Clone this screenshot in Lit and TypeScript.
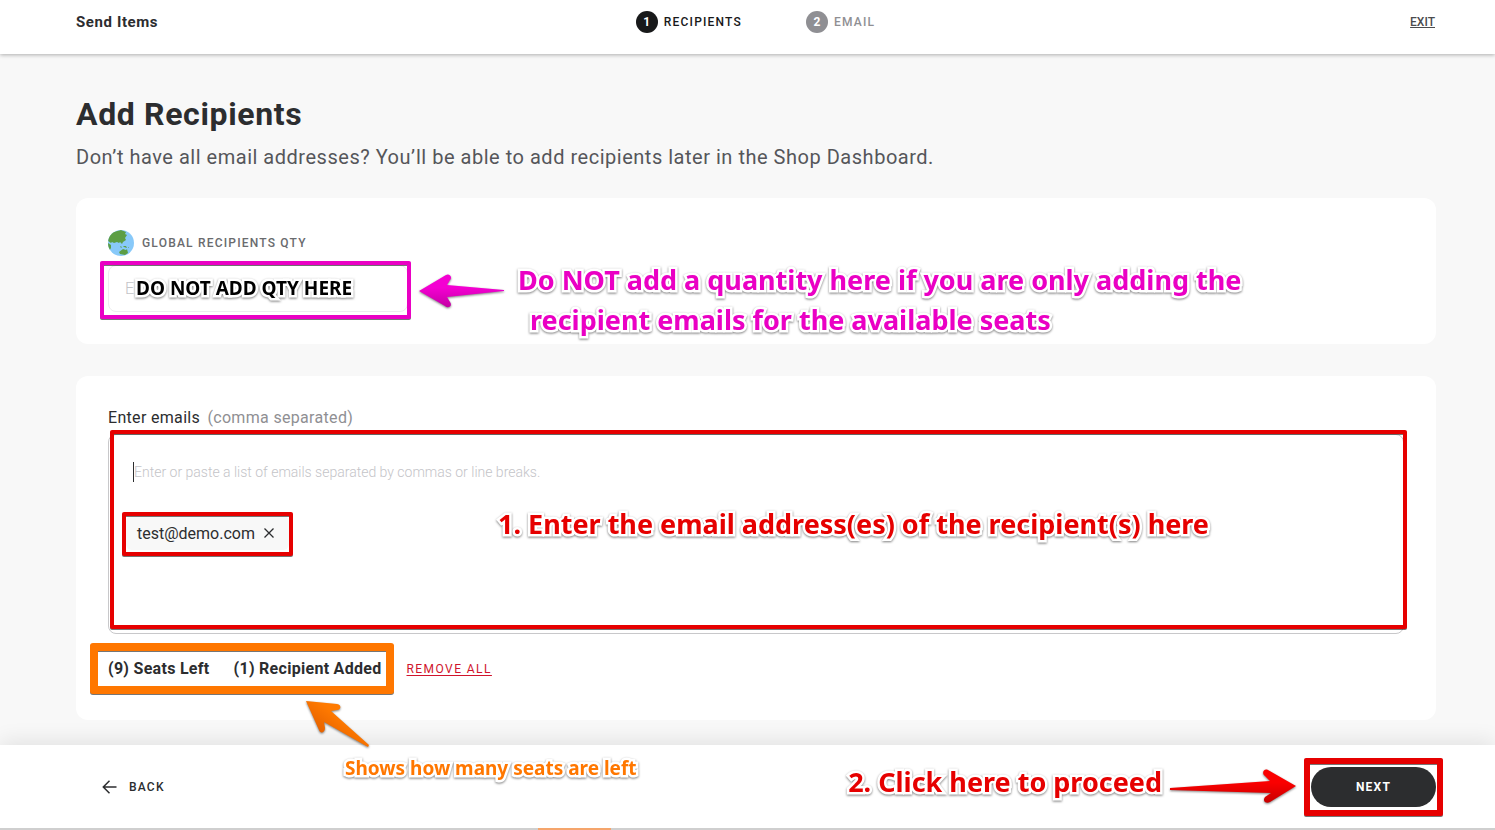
import { LitElement, html, css, svg } from "lit";
import { customElement, state } from "lit/decorators.js";

const globe = svg`
  <defs><clipPath id="globe-disc"><circle cx="13" cy="13" r="13"/></clipPath></defs>
  <g clip-path="url(#globe-disc)">
    <rect width="26" height="26" fill="#88c9f9"/>
    <path fill="#5c9e45" d="M2 3 L13 0 L18 2 L17 4 L19 5 L17 8 L18 10 L15 12 L14 14 L12 12 L11 13 L9 12 L6 13 L4 12 L3 13 L0 11 L0 5Z"/>
    <path fill="#5c9e45" d="M0 13 L3 15 L3 18 L1 21 L-1 19Z M12 16 l2 1 -1 1z M15 16 l3 0 1 2 -3 -1z M11 22 L15 19 L18 20 L19 19 L20 23 L17 25 L12 24Z M20 18 l1 -1 0 1z"/>
  </g>`;

@customElement("app-root")
export class AppRoot extends LitElement {
  @state() private emails = ["test@demo.com"];
  private seats = 10;

  static styles = css`
    :host {
      display: flex;
      flex-direction: column;
      min-height: 100vh;
      background: #f8f8f8;
      color: #2c2d2f;
      font-family: Roboto, "Liberation Sans", sans-serif;
    }
    * { box-sizing: border-box; }
    button, input, textarea { font: inherit; color: inherit; }
    button { background: none; border: 0; padding: 0; cursor: pointer; }
    .header {
      display: grid;
      grid-template-columns: 1fr auto 1fr;
      align-items: center;
      height: 54px;
      padding: 0 60px 10px 76px;
      background: #fff;
      box-shadow: 0 1px 4px rgba(0, 0, 0, 0.3);
    }
    .title { font-size: 15px; font-weight: 700; letter-spacing: 0.04em; }
    .steps { display: flex; gap: 64px; margin: 0; padding: 0; list-style: none; }
    .step {
      display: flex;
      align-items: center;
      gap: 6px;
      font-size: 12px;
      font-weight: 500;
      letter-spacing: 0.1em;
      color: #8f8f93;
    }
    .step.active { color: #18191a; }
    .dot {
      display: grid;
      place-items: center;
      width: 22px;
      height: 22px;
      border-radius: 50%;
      background: #8f8f93;
      color: #fff;
      font-weight: 700;
      letter-spacing: 0;
    }
    .active .dot { background: #18191a; }
    .exit { justify-self: end; color: #4b4c4e; font-size: 12px; font-weight: 500; }
    .main { flex: 1; padding: 42px 59px 24px 76px; }
    h1 { margin: 0; font-size: 32px; line-height: 36px; font-weight: 700; letter-spacing: 0.02em; }
    .lead { margin: 12px 0 28px; font-size: 20px; line-height: 26px; letter-spacing: 0.026em; color: #55565a; font-weight: 400; }
    .card { position: relative; background: #fff; border-radius: 12px; padding: 32px; }
    .card + .card { margin-top: 32px; padding-bottom: 37px; }
    .qty-label {
      display: flex;
      align-items: center;
      gap: 8px;
      height: 26px;
      font-size: 12px;
      font-weight: 500;
      letter-spacing: 0.1em;
      color: #6a6b6e;
    }
    .globe { width: 26px; height: 26px; }
    .field { position: relative; width: 300px; margin-top: 9px; }
    .qty {
      display: block;
      width: 100%;
      height: 47px;
      padding: 0 16px;
      border: 1px solid #ececee;
      border-radius: 8px;
      background: #fff;
      font-size: 16px;
      font-weight: 300;
      outline: 0;
    }
    .qty::placeholder, .entry::placeholder { color: #c4c4c8; opacity: 1; }
    .emails-label { display: block; font-size: 16px; line-height: 20px; letter-spacing: 0.02em; }
    .hint { margin-left: 3px; color: #8f8f93; }
    .box {
      position: relative;
      height: 200px;
      margin-top: 6px;
      padding: 27px 17px;
      border: 1px solid #c8c8ca;
      border-radius: 8px;
    }
    .entry {
      display: block;
      width: 100%;
      height: 20px;
      padding: 0 0 0 8px;
      border: 0;
      outline: 0;
      resize: none;
      overflow: hidden;
      background: none;
      font-size: 14px;
      line-height: 20px;
      font-weight: 300;
    }
    .caret { position: absolute; left: 24px; top: 27px; width: 1px; height: 20px; background: #2c2d2f; }
    .chips { display: flex; gap: 8px; margin-top: 34px; }
    .chip {
      position: relative;
      display: flex;
      align-items: center;
      gap: 9px;
      height: 34px;
      padding: 0 15px 0 11px;
      border-radius: 6px;
      background: #f8f8f8;
      font-size: 16px;
    }
    .x { display: grid; }
    .summary { display: flex; align-items: center; gap: 25px; height: 28px; margin-top: 21px; }
    .counts {
      position: relative;
      display: flex;
      gap: 24px;
      font-size: 16px;
      font-weight: 700;
      line-height: 28px;
      letter-spacing: 0.018em;
    }
    .remove {
      color: #d0142c;
      font-size: 12px;
      letter-spacing: 0.12em;
      text-decoration: underline;
      text-underline-offset: 2px;
    }
    .footer {
      position: relative;
      display: flex;
      align-items: center;
      justify-content: space-between;
      height: 85px;
      padding: 0 59px 0 102px;
      background: #fff;
      border-bottom: 2px solid #cfcfcf;
      box-shadow: 0 -4px 20px rgba(0, 0, 0, 0.09);
    }
    .footer::after {
      content: "";
      position: absolute;
      left: 36%;
      bottom: -2px;
      width: 73px;
      height: 2px;
      background: #f5a56c;
    }
    .back { display: flex; align-items: center; gap: 12px; font-size: 12px; font-weight: 500; letter-spacing: 0.1em; }
    .next {
      width: 125px;
      height: 40px;
      border-radius: 20px;
      background: #2c2d2f;
      color: #fff;
      font-size: 12px;
      font-weight: 700;
      letter-spacing: 0.1em;
    }
    .next-wrap { position: relative; display: flex; }

    /* Tutorial overlay: frames, arrows and captions above the form */
    .frame {
      position: absolute;
      border: 4px solid #e60000;
      border-radius: 2px;
      pointer-events: none;
      filter: drop-shadow(0 1px 0 rgba(60, 60, 60, 0.7));
    }
    .frame-qty { inset: -4px -3px -7px -8px; border-color: #ea00c4; }
    .frame-box { inset: -5px -4px 4px 1px; }
    .frame-chip { inset: -4px -4px -6px; }
    .frame-counts { inset: -12px -13px -11px -18px; border: 8px solid #ff7700; border-radius: 3px; }
    .frame-next { inset: -9px -7px; border-width: 6px; }
    .note {
      position: absolute;
      margin: 0;
      color: #e60000;
      font-family: "Noto Sans", "Open Sans", sans-serif;
      font-weight: 700;
      font-size: 27px;
      line-height: 40px;
      white-space: nowrap;
      pointer-events: none;
      -webkit-text-stroke: 5px #fff;
      paint-order: stroke fill;
      filter: drop-shadow(0 1px 1px rgba(0, 0, 0, 0.5));
    }
    .note-field { left: 28px; top: 3px; color: #000; font-size: 19px; }
    .note-qty { left: 442px; top: 62px; color: #ea00c4; }
    .second { padding-left: 12px; }
    .note-emails { left: 389px; top: 69px; }
    .note-seats { left: 345px; top: 3px; color: #ff7700; font-size: 19px; }
    .note-next { right: 333px; top: 17px; }
    .arrow { position: absolute; overflow: visible; pointer-events: none; filter: drop-shadow(0 1px 1px rgba(0, 0, 0, 0.5)); }
    .arrow-qty { left: 343px; top: 76px; }
    .arrow-seats { left: 230px; bottom: -27px; z-index: 1; }
    .arrow-next { right: 199px; top: 23px; }
  `;

  private remove(email: string) {
    this.emails = this.emails.filter((e) => e !== email);
  }

  render() {
    const added = this.emails.length;
    return html`
      <header class="header">
        <span class="title">Send Items</span>
        <ol class="steps">
          <li class="step active"><span class="dot">1</span>RECIPIENTS</li>
          <li class="step"><span class="dot">2</span>EMAIL</li>
        </ol>
        <a class="exit" href="#exit">EXIT</a>
      </header>
      <main class="main">
        <h1>Add Recipients</h1>
        <p class="lead">Don’t have all email addresses? You’ll be able to add recipients later in the Shop Dashboard.</p>

        <section class="card">
          <label class="qty-label" for="qty">
            <svg class="globe" viewBox="0 0 26 26" aria-hidden="true">${globe}</svg>
            GLOBAL RECIPIENTS QTY
          </label>
          <div class="field">
            <input class="qty" id="qty" type="text" inputmode="numeric" placeholder="E" />
            <span class="frame frame-qty"></span>
            <p class="note note-field">DO NOT ADD QTY HERE</p>
          </div>
          <svg class="arrow arrow-qty" width="85" height="34" viewBox="0 0 85 34" aria-hidden="true">
            <defs><linearGradient id="pink" x1="0" y1="0" x2="0" y2="1"><stop offset="0.4" stop-color="#f400d2"/><stop offset="1" stop-color="#c400a4"/></linearGradient></defs>
            <path fill="url(#pink)" d="M0 17 L27 1 C30 -1 34 3 31 6 L28 11 L85 16 L85 17 L28 23 L31 28 C34 32 29 35 26 32Z"/>
          </svg>
          <p class="note note-qty">Do NOT add a quantity here if you are only adding the<br /><span class="second">recipient emails for the available seats</span></p>
        </section>

        <section class="card">
          <label class="emails-label" for="emails">Enter emails <span class="hint">(comma separated)</span></label>
          <div class="box">
            <textarea class="entry" id="emails" rows="1" placeholder="Enter or paste a list of emails separated by commas or line breaks."></textarea>
            <span class="caret"></span>
            <div class="chips">
              ${this.emails.map((email) => html`
                <div class="chip">
                  <span>${email}</span>
                  <button class="x" aria-label="Remove ${email}" @click=${() => this.remove(email)}>
                    <svg width="10" height="10" viewBox="0 0 10 10"><path d="M0.5 0.5 L9.5 9.5 M9.5 0.5 L0.5 9.5" stroke="#2c2d2f" stroke-width="1.3"/></svg>
                  </button>
                  <span class="frame frame-chip"></span>
                </div>`)}
            </div>
            <span class="frame frame-box"></span>
            <p class="note note-emails">1. Enter the email address(es) of the recipient(s) here</p>
          </div>
          <div class="summary">
            <div class="counts">
              <span>(${this.seats - added}) Seats Left</span>
              <span>(${added}) Recipient Added</span>
              <span class="frame frame-counts"></span>
            </div>
            <button class="remove" @click=${() => { this.emails = []; }}>REMOVE ALL</button>
          </div>
          <svg class="arrow arrow-seats" width="63" height="46" viewBox="0 0 63 46" aria-hidden="true">
            <defs><linearGradient id="orange" x1="0" y1="1" x2="1" y2="0"><stop offset="0.3" stop-color="#e86400"/><stop offset="0.6" stop-color="#ff7a00"/></linearGradient></defs>
            <path fill="url(#orange)" d="M0 0 L31 3 C36 4 35 9 31 9 L25 10 L63 44 L62 46 L18 21 L19 27 C19 32 14 33 13 29Z"/>
          </svg>
        </section>
      </main>
      <footer class="footer">
        <button class="back">
          <svg width="15" height="14" viewBox="0 0 15 14" aria-hidden="true"><path d="M7.5 0.8 L1.3 7 L7.5 13.2 M1.3 7 H14.5" fill="none" stroke="#2c2d2f" stroke-width="1.5"/></svg>
          BACK
        </button>
        <p class="note note-seats">Shows how many seats are left</p>
        <p class="note note-next">2. Click here to proceed</p>
        <svg class="arrow arrow-next" width="126" height="36" viewBox="0 0 126 36" aria-hidden="true">
          <defs><linearGradient id="red" x1="0" y1="0" x2="0" y2="1"><stop offset="0.4" stop-color="#fa0000"/><stop offset="1" stop-color="#c80000"/></linearGradient></defs>
          <path fill="url(#red)" d="M126 18 L98 2 C94 0 91 5 95 8 L100 13 L0 20 L0 22 L101 25 L95 29 C92 33 96 36 100 34Z"/>
        </svg>
        <div class="next-wrap">
          <button class="next">NEXT</button>
          <span class="frame frame-next"></span>
        </div>
      </footer>
    `;
  }
}
